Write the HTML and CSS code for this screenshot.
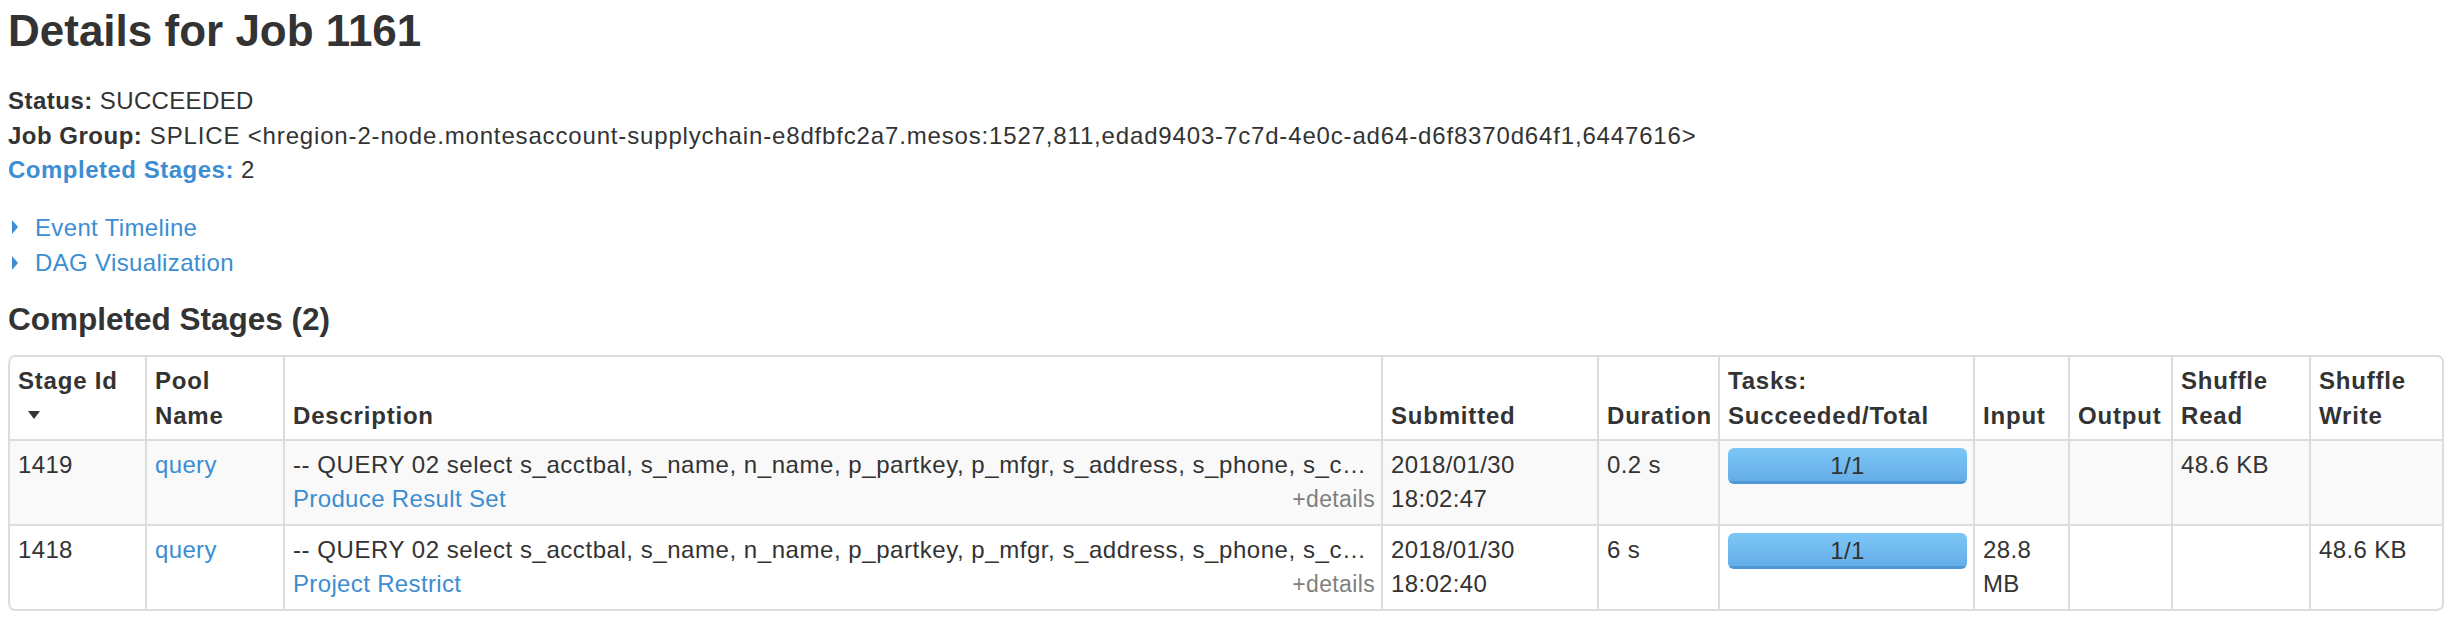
FILE: index.html
```html
<!DOCTYPE html>
<html>
<head>
<meta charset="utf-8">
<title>Details for Job 1161</title>
<link rel="stylesheet" href="styles.css">
</head>
<body>
<div class="page">
  <h3 class="title">Details for Job 1161</h3>
  <ul class="summary">
    <li><strong>Status:</strong> SUCCEEDED</li>
    <li class="job-group"><strong>Job Group:</strong> SPLICE &lt;hregion-2-node.montesaccount-supplychain-e8dfbfc2a7.mesos:1527,811,edad9403-7c7d-4e0c-ad64-d6f8370d64f1,6447616&gt;</li>
    <li><a class="link" href="#completed"><strong>Completed Stages:</strong></a> 2</li>
  </ul>
  <div class="expanders">
    <div class="expander"><span class="arrow-closed"></span><a class="link" href="#">Event Timeline</a></div>
    <div class="expander"><span class="arrow-closed"></span><a class="link" href="#">DAG Visualization</a></div>
  </div>
  <h4 class="section-title" id="completed">Completed Stages (2)</h4>
  <table class="stages">
    <colgroup>
      <col class="c-id"><col class="c-pool"><col class="c-desc"><col class="c-sub"><col class="c-dur"><col class="c-tasks"><col class="c-in"><col class="c-out"><col class="c-sr"><col class="c-sw">
    </colgroup>
    <thead>
      <tr>
        <th>Stage Id<span class="sort-arrow"></span></th>
        <th>Pool Name</th>
        <th>Description</th>
        <th>Submitted</th>
        <th>Duration</th>
        <th>Tasks: Succeeded/Total</th>
        <th>Input</th>
        <th>Output</th>
        <th>Shuffle Read</th>
        <th>Shuffle Write</th>
      </tr>
    </thead>
    <tbody>
      <tr class="odd">
        <td>1419</td>
        <td><a class="link" href="#">query</a></td>
        <td>
          <div class="desc-input">-- QUERY 02 select s_acctbal, s_name, n_name, p_partkey, p_mfgr, s_address, s_phone, s_c…</div>
          <div class="desc-second"><a class="link" href="#">Produce Result Set</a><span class="expand-details">+details</span></div>
        </td>
        <td>2018/01/30 18:02:47</td>
        <td>0.2 s</td>
        <td><div class="progress"><div class="bar" style="width: 100%"></div><span class="progress-label">1/1</span></div></td>
        <td></td>
        <td></td>
        <td>48.6 KB</td>
        <td></td>
      </tr>
      <tr>
        <td>1418</td>
        <td><a class="link" href="#">query</a></td>
        <td>
          <div class="desc-input">-- QUERY 02 select s_acctbal, s_name, n_name, p_partkey, p_mfgr, s_address, s_phone, s_c…</div>
          <div class="desc-second"><a class="link" href="#">Project Restrict</a><span class="expand-details">+details</span></div>
        </td>
        <td>2018/01/30 18:02:40</td>
        <td>6 s</td>
        <td><div class="progress"><div class="bar" style="width: 100%"></div><span class="progress-label">1/1</span></div></td>
        <td>28.8 MB</td>
        <td></td>
        <td></td>
        <td>48.6 KB</td>
      </tr>
    </tbody>
  </table>
</div>
</body>
</html>
```

FILE: styles.css
```css
html, body {
  margin: 0;
  padding: 0;
  background: #ffffff;
}

body {
  font-family: "Liberation Sans", Arial, Helvetica, sans-serif;
  font-size: 24px;
  line-height: 34.5px;
  color: #333333;
  letter-spacing: 0.35px;
}

.page {
  padding: 0 8px;
}

.title {
  margin: 6px 0 0 0;
  font-size: 44px;
  line-height: 50px;
  font-weight: bold;
  color: #333333;
  letter-spacing: 0;
}

.summary {
  list-style: none;
  margin: 28px 0 0 0;
  padding: 0;
}

.summary strong {
  font-weight: bold;
  letter-spacing: 0.5px;
}

.job-group {
  letter-spacing: 0.84px;
}

.link {
  color: #3c8dd2;
  text-decoration: none;
}

.expanders {
  margin-top: 22px;
}

.expander {
  display: flex;
  align-items: center;
  line-height: 35.5px;
}

.arrow-closed {
  display: inline-block;
  width: 0;
  height: 0;
  margin-left: 4px;
  margin-right: 17px;
  border-top: 7px solid transparent;
  border-bottom: 7px solid transparent;
  border-left: 6px solid #3c8dd2;
}

.section-title {
  margin: 21px 0 0 0;
  font-size: 31.5px;
  line-height: 35px;
  font-weight: bold;
  color: #333333;
  letter-spacing: 0;
}

.stages {
  margin-top: 18px;
  width: 100%;
  table-layout: fixed;
  border-collapse: separate;
  border-spacing: 0;
  border: 2px solid #dddddd;
  border-left: 0;
  border-radius: 7px;
}

.c-id { width: 137px; }
.c-pool { width: 138px; }
.c-desc { width: 1098px; }
.c-sub { width: 216px; }
.c-dur { width: 121px; }
.c-tasks { width: 255px; }
.c-in { width: 95px; }
.c-out { width: 103px; }
.c-sr { width: 138px; }
.c-sw { width: 133px; }

.stages th,
.stages td {
  padding: 7px 6px 7px 8px;
  border-left: 2px solid #dddddd;
  text-align: left;
  vertical-align: top;
  line-height: 34.5px;
}

.stages th {
  padding-top: 6px;
  padding-bottom: 6px;
  vertical-align: bottom;
  font-weight: bold;
  letter-spacing: 0.8px;
  line-height: 35px;
}

.stages tbody td {
  border-top: 2px solid #dddddd;
}

.stages thead th:first-child {
  border-top-left-radius: 7px;
}

.stages tbody tr:last-child td:first-child {
  border-bottom-left-radius: 7px;
}

.stages tr.odd td {
  background: #f9f9f9;
}

.sort-arrow {
  display: block;
  width: 0;
  height: 0;
  margin: 13px 0 14px 10px;
  border-left: 6.5px solid transparent;
  border-right: 6.5px solid transparent;
  border-top: 8px solid #333333;
}

.desc-input {
  white-space: nowrap;
  overflow: hidden;
  text-overflow: ellipsis;
  letter-spacing: 0.55px;
}

.desc-second {
  display: flex;
  justify-content: space-between;
}

.expand-details {
  color: #808080;
  font-size: 23px;
}

.progress {
  position: relative;
  height: 36px;
  margin-top: 0px;
  border-radius: 6px;
  overflow: hidden;
  background: #eeeeee;
  text-align: center;
}

.bar {
  height: 100%;
  background: linear-gradient(to bottom, #7dc7f7, #63abe6);
  box-shadow: inset 0 -3px 0 rgba(40, 110, 180, 0.35);
}

.progress-label {
  position: absolute;
  left: 0;
  right: 0;
  top: 0;
  line-height: 36px;
  color: #333333;
}
```
